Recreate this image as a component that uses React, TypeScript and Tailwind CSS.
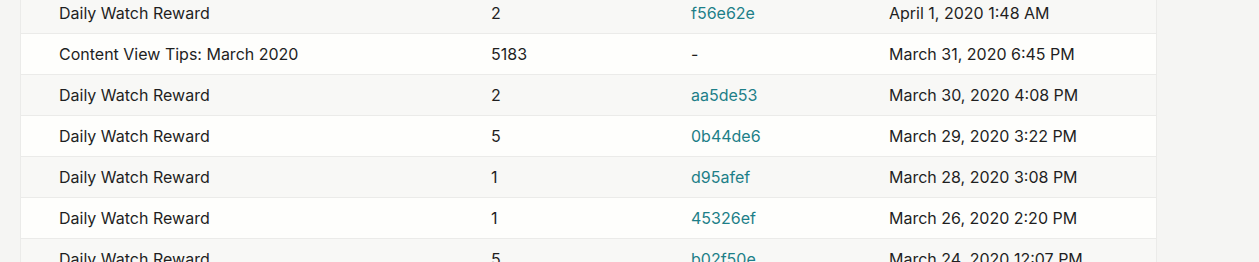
import React from 'react'

interface Row {
    title: string;
    amount: string;
    tx: string;
    date: string;
}

const rows: Row[] = [
    { title: 'Daily Watch Reward', amount: '2', tx: 'f56e62e', date: 'April 1, 2020 1:48 AM' },
    { title: 'Content View Tips: March 2020', amount: '5183', tx: '-', date: 'March 31, 2020 6:45 PM' },
    { title: 'Daily Watch Reward', amount: '2', tx: 'aa5de53', date: 'March 30, 2020 4:08 PM' },
    { title: 'Daily Watch Reward', amount: '5', tx: '0b44de6', date: 'March 29, 2020 3:22 PM' },
    { title: 'Daily Watch Reward', amount: '1', tx: 'd95afef', date: 'March 28, 2020 3:08 PM' },
    { title: 'Daily Watch Reward', amount: '1', tx: '45326ef', date: 'March 26, 2020 2:20 PM' },
    { title: 'Daily Watch Reward', amount: '5', tx: 'b02f50e', date: 'March 24, 2020 12:07 PM' },
]

export default function App() {
    return (
        <div className="h-[262px] overflow-hidden bg-[#f5f5f3] font-['Inter',sans-serif] text-[16px] text-[#1f1f1f]">
            <div className="ml-[20px] mt-[-7px] w-[1137px] border-x border-[#ebebe9]">
                {rows.map((row, i) => (
                    <div
                        key={i}
                        className={`grid h-[41px] grid-cols-[432px_200px_198px_1fr] items-center border-b border-[#ebebe9] pl-[38px] ${i % 2 === 0 ? 'bg-[#f8f8f6]' : 'bg-[#fefefc]'}`}
                    >
                        <span>{row.title}</span>
                        <span>{row.amount}</span>
                        {row.tx === '-' ? (
                            <span>-</span>
                        ) : (
                            <a href="#" className="text-[#1d7f88]">{row.tx}</a>
                        )}
                        <span>{row.date}</span>
                    </div>
                ))}
            </div>
        </div>
    )
}
